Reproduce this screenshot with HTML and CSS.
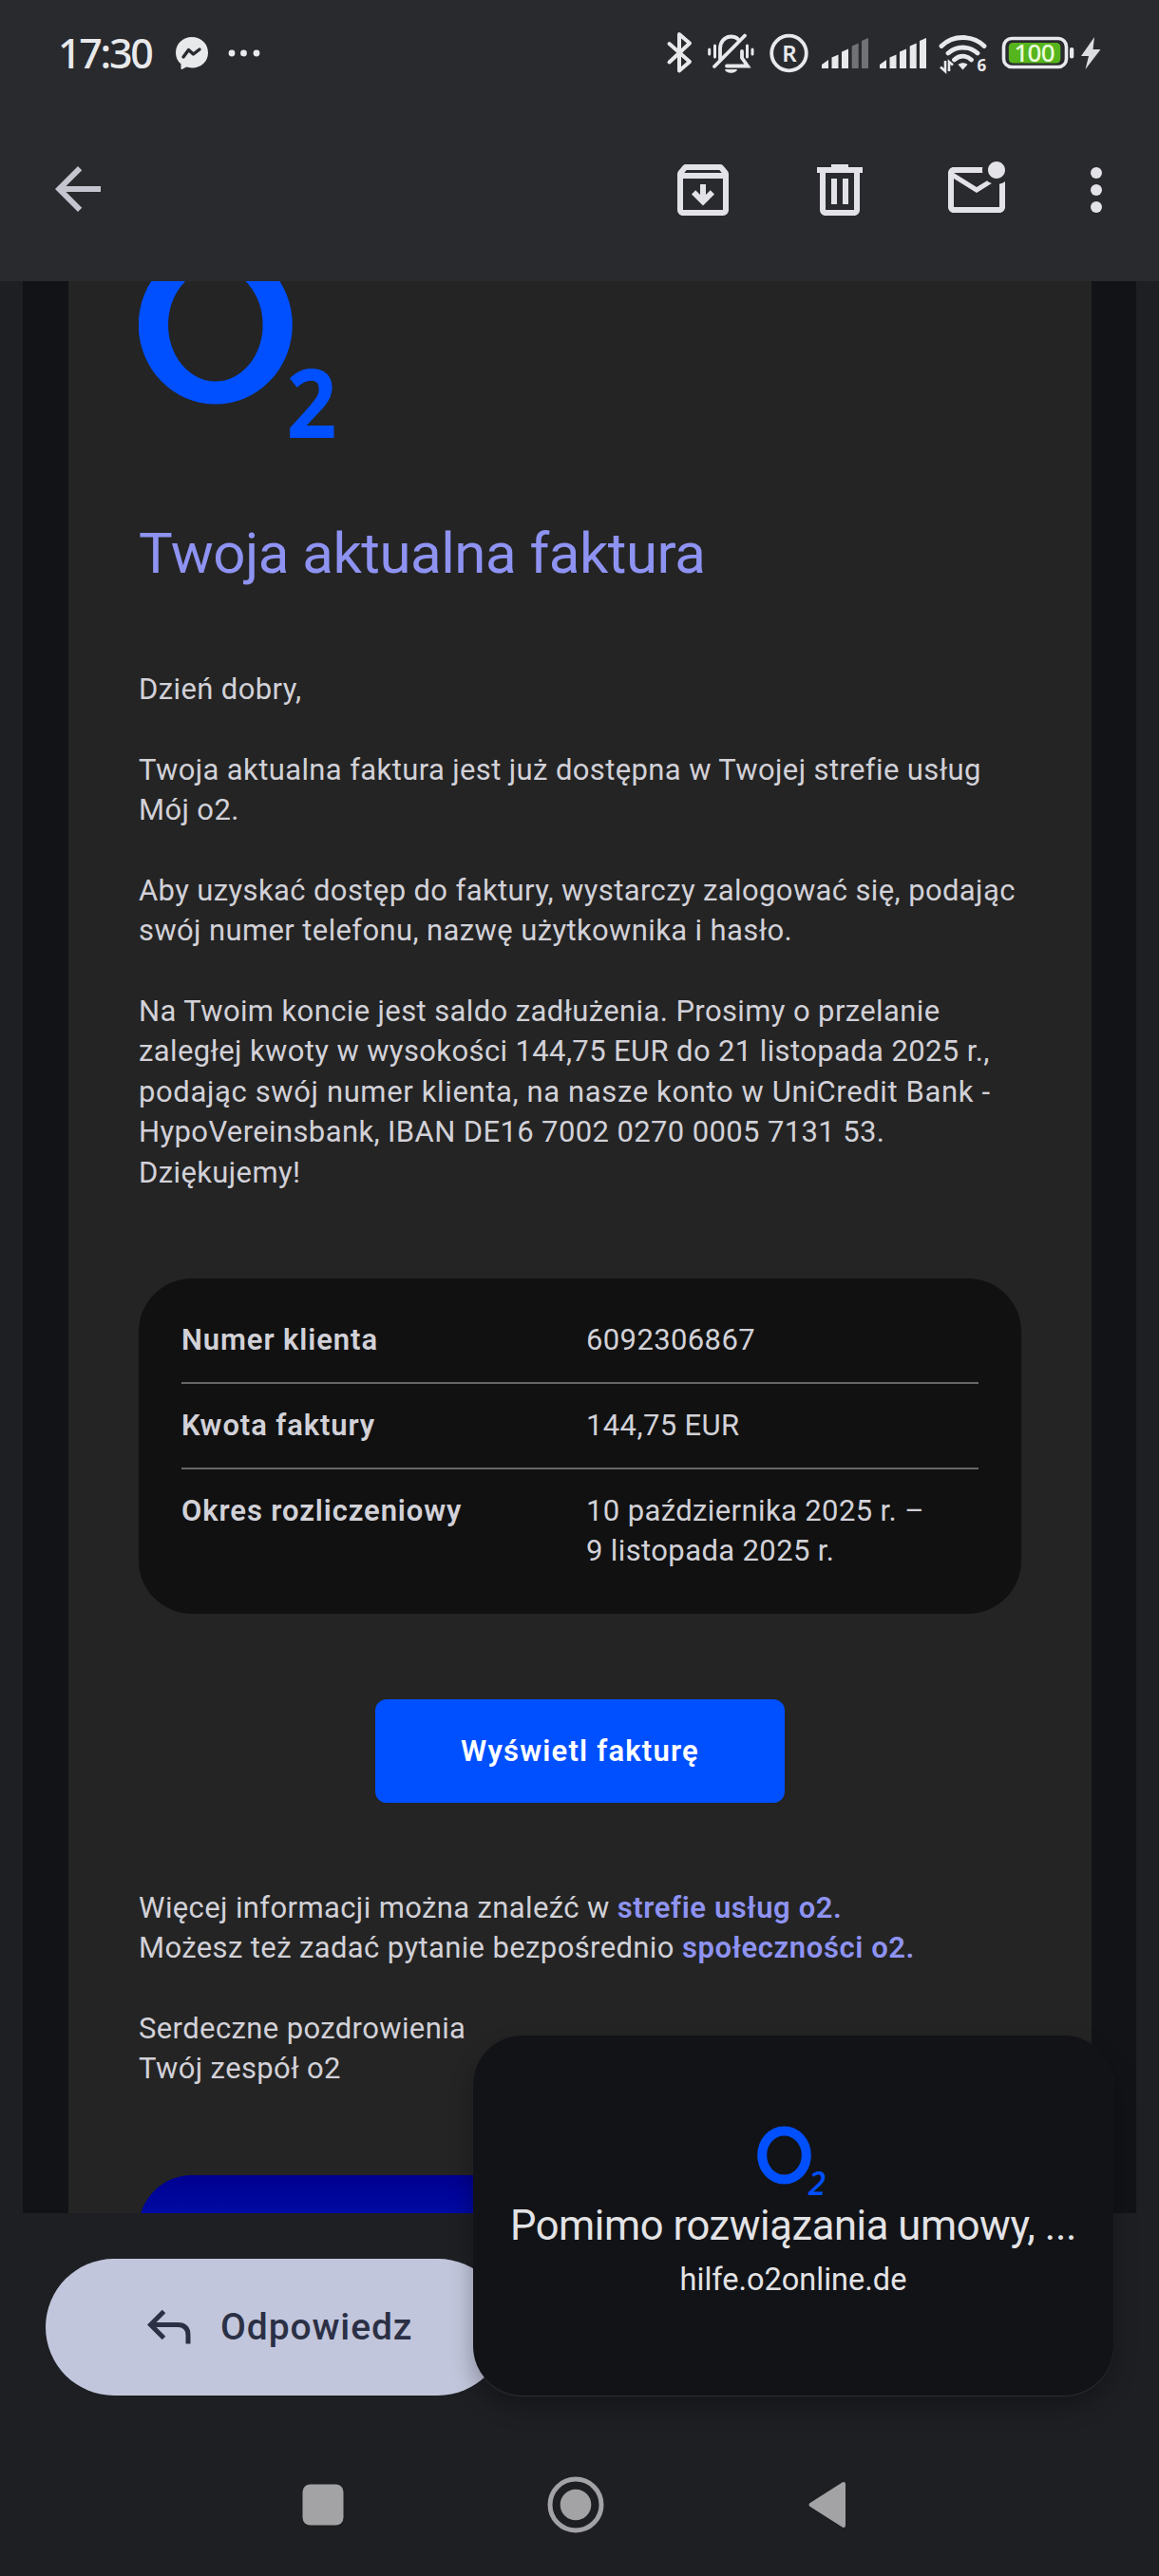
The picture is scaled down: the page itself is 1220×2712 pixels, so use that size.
FILE: index.html
```html
<!DOCTYPE html>
<html lang="pl">
<head>
  <meta charset="UTF-8" />
  <meta name="viewport" content="width=device-width, initial-scale=1" />
  <title>Twoja aktualna faktura</title>
  <link rel="stylesheet" href="styles.css">
</head>
<body>
  <header class="top">
    <div class="status">
      <span class="clock">17:30</span>
      <svg class="messenger" width="34" height="34" viewBox="0 0 34 34">
        <path d="M17 0C7.500 0 0 7 0 16.500c0 4.800 2 9 5.500 12V33c0 .8.8 1.300 1.500.8l4.200-2.200c1.800.5 3.700.8 5.800.8 9.500 0 17-6.600 17-16S26.500 0 17 0z" fill="#e8e9eb"/>
        <path d="M8 21l5.500-7.500 5 4.500 6.500-5" fill="none" stroke="#292a2e" stroke-width="3.400" stroke-linejoin="round" stroke-linecap="round"/>
      </svg>
      <svg class="more" width="34" height="8" viewBox="0 0 34 8" fill="#e8e9eb">
        <circle cx="4" cy="4" r="3.400"/><circle cx="16.500" cy="4" r="3.400"/><circle cx="30" cy="4" r="3.400"/>
      </svg>

      <!-- ikony po prawej stronie paska -->
      <svg class="system" width="460" height="64" viewBox="700 24 460 64">
        <path d="M704.500 46l21.500 19-11 9.500V36l11 9.500-21.500 20" fill="none" stroke="#e8e9eb" stroke-width="4" stroke-linecap="round" stroke-linejoin="round"/>

        <g fill="none" stroke="#e8e9eb" stroke-width="3.800" stroke-linecap="round">
          <path d="M758 62V51c0-7 5-12.500 11.500-12.500 3 0 5.500 1 7.500 2.800M781 54v7l6 8.500h-22"/>
          <path d="M752 70l32-32.500"/>
          <path d="M752.500 48v12M746.700 52v5M786.500 48v12M792 52v5" stroke-width="3"/>
        </g>
        <path d="M763 73h13c-1 5-12 5-13 0z" fill="#e8e9eb"/>

        <circle cx="830.500" cy="56" r="18.300" fill="none" stroke="#e8e9eb" stroke-width="3.800"/>
        <text x="831" y="64.500" class="reg" text-anchor="middle">R</text>

        <g fill="#e8e9eb">
          <path d="M865 72v-4l7-5v9zM875.500 72V60.500l7-3V72zM886 72V54.500l7-3V72z"/>
          <path d="M896.700 72V48.500l7-3V72zM907 72V43l7-3v32z" fill="#717276"/>
          <path d="M926 72v-4l7-5v9zM936.500 72V60.500l7-3V72zM947 72V54.500l7-3V72zM957.700 72V48.500l7-3V72zM968 72V43l7-3v32z"/>
        </g>

        <g fill="none" stroke="#e8e9eb" stroke-width="4.800" stroke-linecap="round">
          <path d="M991 48.500c12-12 33-12 45 0"/>
          <path d="M998 56c9-8 22-8 31 0"/>
          <path d="M1004.500 63c5.500-5 12.500-5 18 0"/>
        </g>
        <path d="M1008.500 68c3-2.500 7-2.500 10 0l-5 5.500z" fill="#e8e9eb"/>
        <path d="M995 64v11l-5-4.500M999 75V65l4 3.500" fill="none" stroke="#e8e9eb" stroke-width="2.600"/>
        <text x="1028.500" y="75" class="wifi-six">6</text>

        <rect x="1056.500" y="40.500" width="66" height="30" rx="8.500" fill="none" stroke="#e8e9eb" stroke-width="3.600"/>
        <rect x="1061.800" y="45" width="54.500" height="21.500" rx="4.500" fill="#56b51c"/>
        <rect x="1126" y="50" width="4.300" height="11.500" rx="2" fill="#e8e9eb"/>
        <text x="1089" y="65" class="battery" text-anchor="middle" textLength="43">100</text>
        <path d="M1152 39l-14 20h8l-3.500 14 16-21h-8z" fill="#dcdde0"/>
      </svg>
    </div>

    <div class="toolbar">
      <svg class="back" width="72" height="72" viewBox="0 0 24 24" fill="#c5c5cf"><path d="M20 11H7.830l5.590-5.590L12 4l-8 8 8 8 1.410-1.410L7.830 13H20z"/></svg>
      <svg class="archive" width="72" height="72" viewBox="0 0 24 24" fill="#e2e2e8">
        <path d="M20.540 5.230l-1.390-1.680C18.880 3.210 18.470 3 18 3H6c-.47 0-.88.21-1.160.55L3.460 5.230C3.170 5.570 3 6.020 3 6.500V19c0 1.100.9 2 2 2h14c1.100 0 2-.9 2-2V6.500c0-.48-.17-.93-.46-1.270zM6.240 5h11.520l.83 1H5.420zM5 19V8h14v11z"/>
        <path d="M12 17.500l4-4-1.400-1.400L13 13.700V10h-2v3.700l-1.600-1.600L8 13.500z"/>
      </svg>
      <svg class="trash" width="72" height="72" viewBox="0 0 24 24" fill="#e2e2e8">
        <path d="M7 21c-1.100 0-2-.9-2-2V6H4V4h5V3h6v1h5v2h-1v13c0 1.100-.9 2-2 2zM17 6H7v13h10zM9 17h2V8H9zm4 0h2V8h-2z"/>
      </svg>
      <svg class="unread" width="72" height="72" viewBox="0 0 24 24" fill="#e2e2e8">
        <path d="M22 8.980V18c0 1.100-.9 2-2 2H4c-1.100 0-2-.9-2-2V6c0-1.100.9-2 2-2h10.100c-.06.32-.1.66-.1 1 0 .34.04.68.1 1H4l8 5 3.670-2.290c.47.43 1.020.76 1.630.98L12 13 4 8v10h16V9.900c.74-.15 1.420-.48 2-.92zM16 5c0 1.660 1.340 3 3 3s3-1.340 3-3-1.340-3-3-3-3 1.340-3 3z"/>
      </svg>
      <svg class="menu" width="72" height="72" viewBox="0 0 24 24" fill="#e2e2e8"><circle cx="12" cy="6" r="2"/><circle cx="12" cy="12" r="2"/><circle cx="12" cy="18" r="2"/></svg>
    </div>
  </header>

  <main class="mail">
    <div class="mail-body">
      <svg class="logo" width="230" height="200" viewBox="0 0 230 200">
        <path fill-rule="evenodd" d="M-.2 46a81 83.500 0 1 0 162 0a81 83.500 0 1 0-162 0zM31 46a49.800 59.500 0 1 1 99.600 0a49.800 59.500 0 1 1-99.600 0z" fill="#0050ff"/>
        <text x="155.500" y="165" class="logo-two" textLength="53" lengthAdjust="spacingAndGlyphs">2</text>
      </svg>

      <h1>Twoja aktualna faktura</h1>

      <p>Dzień dobry,</p>
      <p>Twoja aktualna faktura jest już dostępna w Twojej strefie usług<br>Mój o2.</p>
      <p>Aby uzyskać dostęp do faktury, wystarczy zalogować się, podając<br>swój numer telefonu, nazwę użytkownika i hasło.</p>
      <p>Na Twoim koncie jest saldo zadłużenia. Prosimy o przelanie<br>
        zaległej kwoty w wysokości 144,75 EUR do 21 listopada 2025 r.,<br>
        <span class="wide">podając swój numer klienta, na nasze konto w UniCredit Bank -</span><br>
        HypoVereinsbank, IBAN DE16 7002 0270 0005 7131 53.<br>
        Dziękujemy!</p>

      <div class="card">
        <div class="row"><b>Numer klienta</b><span>6092306867</span></div>
        <div class="row"><b>Kwota faktury</b><span>144,75 EUR</span></div>
        <div class="row"><b>Okres rozliczeniowy</b><span>10 października 2025 r. –<br>9 listopada 2025 r.</span></div>
      </div>

      <a class="btn">Wyświetl fakturę</a>

      <p>Więcej informacji można znaleźć w <a class="link">strefie usług o2.</a><br>Możesz też zadać pytanie bezpośrednio <a class="link">społeczności o2.</a></p>
      <p>Serdeczne pozdrowienia<br>Twój zespół o2</p>

      <div class="banner"></div>
    </div>
  </main>

  <div class="reply-bar">
    <div class="reply">
      <svg width="46" height="36" viewBox="0 0 46 36" fill="none" stroke="#2b3045" stroke-width="5">
        <path d="M17.500 1.500L3.500 15.500l14 14M3.500 15.500h28.500q11 0 11 11V35.500"/>
      </svg>
      <span>Odpowiedz</span>
    </div>
  </div>

  <nav class="nav">
    <svg width="44" height="44"><rect x=".5" y=".5" width="43" height="43" rx="8" fill="#a3a3a6"/></svg>
    <svg width="60" height="60"><circle cx="30" cy="30" r="27" fill="none" stroke="#a3a3a6" stroke-width="5"/><circle cx="30" cy="30" r="16.300" fill="#a3a3a6"/></svg>
    <svg width="42" height="50"><path d="M38 3v44L3.500 25z" fill="#a3a3a6" stroke="#a3a3a6" stroke-width="4" stroke-linejoin="round"/></svg>
  </nav>

  <!-- podgląd linku -->
  <aside class="preview">
    <svg width="90" height="90" viewBox="0 0 90 90">
      <ellipse cx="28.500" cy="31" rx="23.300" ry="25.500" fill="none" stroke="#0050ff" stroke-width="10"/>
      <text x="54" y="73" class="mini-two" textLength="18" lengthAdjust="spacingAndGlyphs">2</text>
    </svg>
    <div class="preview-title">Pomimo rozwiązania umowy, ...</div>
    <div class="preview-url">hilfe.o2online.de</div>
  </aside>
</body>
</html>
```
FILE: styles.css
```css
* {
  box-sizing: border-box;
}

body {
  margin: 0;
  height: 2712px;
  overflow: hidden;
  position: relative;
  display: flex;
  flex-direction: column;
  background: #1e1f23;
  color: #d2d1d8;
  font-family: Roboto, "Noto Sans", sans-serif;
}

svg {
  display: block;
  flex: none;
}

/* górny pasek */
.top {
  height: 296px;
  background: #292a2e;
}

.status {
  height: 112px;
  display: flex;
  align-items: center;
  padding-left: 61px;
}

.clock {
  width: 124px;
  font-family: "Noto Sans", sans-serif;
  font-size: 43px;
  font-weight: 500;
  letter-spacing: -2.300px;
  line-height: 50px;
  color: #e8e9eb;
  white-space: nowrap;
}

.more {
  margin-left: 21px;
}

.system {
  margin-left: 426px;
}

.reg {
  font: 600 24px "Noto Sans", sans-serif;
  fill: #e8e9eb;
}

.wifi-six {
  font: 700 17px "Noto Sans", sans-serif;
  fill: #e8e9eb;
}

.battery {
  font: 500 26px "Noto Sans", sans-serif;
  fill: #eafbdc;
}

.toolbar {
  display: flex;
  padding-top: 52px;
  padding-left: 46px;
}

.back {
  margin-top: -1px;
}

.archive {
  margin-left: 586px;
}

.trash,
.unread {
  margin-left: 72px;
}

.menu {
  margin-left: 54px;
}

/* treść wiadomości */
.mail {
  height: 2034px;
  overflow: hidden;
  margin: 0 24px;
  padding: 0 47px 0 48px;
  background: #121317;
}

.mail-body {
  height: 2034px;
  padding: 0 74px;
  background: #242424;
  font-size: 31px;
  line-height: 42.38px;
  letter-spacing: 0.38px;
}

.logo-two {
  font: 700 100px "Open Sans", sans-serif;
  letter-spacing: 0;
  fill: #0050ff;
}

h1 {
  margin: 51px 0 86px;
  font-size: 60px;
  line-height: 72px;
  font-weight: 400;
  letter-spacing: -0.5px;
  color: #8e93f2;
  white-space: nowrap;
}

p {
  margin: 0 0 42.38px;
  white-space: nowrap;
}

.wide {
  letter-spacing: 0.63px;
}

.card {
  margin: 90px 0;
  height: 353px;
  padding: 21px 45px;
  border-radius: 56px;
  background: #111;
}

.row {
  display: flex;
  padding: 23px 0 22.600px;
  border-bottom: 2px solid #666769;
}

.row:last-child {
  border: 0;
}

.row b {
  width: 426px;
}

.row b,
.link,
.btn {
  font-weight: 600;
  letter-spacing: 0.9px;
}

.btn {
  display: block;
  width: 431px;
  height: 109px;
  margin: 0 auto 90px;
  border-radius: 12px;
  background: #0050ff;
  color: #fff;
  text-align: center;
  line-height: 109px;
  letter-spacing: 1.200px;
}

.link {
  color: #8e93f2;
  letter-spacing: 0.6px;
}

.banner {
  height: 300px;
  margin-top: 90px;
  border-radius: 56px;
  background: linear-gradient(#000090, #000aa2 40px);
}

/* odpowiedź */
.reply-bar {
  padding: 48px 48px 0;
}

.reply {
  width: 485px;
  height: 144px;
  display: flex;
  align-items: center;
  padding-left: 107px;
  border-radius: 72px;
  background: #c2c6dc;
  color: #2b3045;
}

.reply span {
  margin-left: 31px;
  font-size: 39px;
  font-weight: 500;
  letter-spacing: 0.9px;
}

.nav {
  display: flex;
  align-items: center;
  height: 60px;
  margin-top: 85px;
  padding-left: 318px;
}

.nav svg + svg {
  margin-left: 214px;
}

/* okienko nad treścią */
.preview {
  position: absolute;
  left: 498px;
  top: 2143px;
  width: 674px;
  height: 379px;
  padding-top: 95px;
  border-radius: 52px;
  background: #121317;
  box-shadow: 0 12px 24px rgba(0, 0, 0, 0.3), 0 1px 1px rgba(255, 255, 255, 0.15);
  color: #e3e3e6;
  text-align: center;
}

.preview svg {
  margin-left: 299px;
}

.mini-two {
  font: italic 600 34px "Open Sans", sans-serif;
  fill: #0050ff;
}

.preview-title {
  margin-top: -12px;
  font-size: 43.500px;
  line-height: 56px;
  letter-spacing: -0.4px;
  white-space: nowrap;
}

.preview-url {
  font-size: 32.500px;
  line-height: 56px;
}
```
